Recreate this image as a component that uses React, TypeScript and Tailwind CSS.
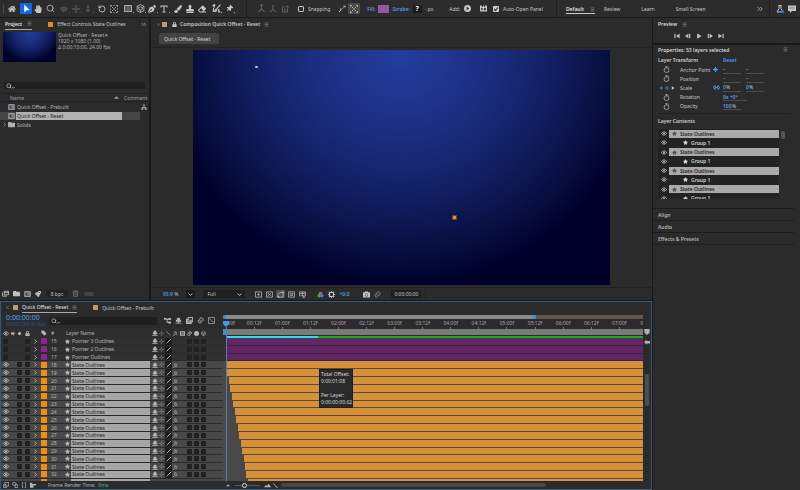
import type { ReactNode } from "react";
import { clsx } from "clsx";
import {
  FaCamera,
  FaEraser,
  FaFolder,
  FaHandPaper,
  FaHome,
  FaLock,
  FaPaintBrush,
  FaPenNib,
  FaRocket,
  FaStamp,
  FaStar,
  FaThumbtack,
} from "react-icons/fa";
import { RotateCcw, Search, Trash2 } from "lucide-react";

const ROW_COLS =
  "grid-cols-[9px_6px_7px_8px_9px_8px_15px_8px_79px_1px_7px_7px_7px_7px_7px_7px_7px_7px]";

/* ---------- icons ---------- */

interface GlyphProps {
  d: string;
  fill?: boolean;
  className?: string;
  box?: string;
  width?: number;
}

function Glyph({ d, fill, className, box = "0 0 16 16", width = 2 }: GlyphProps) {
  return (
    <svg
      className={clsx("shrink-0", className ?? "size-2")}
      viewBox={box}
      fill={fill ? "currentColor" : "none"}
      stroke={fill ? "none" : "currentColor"}
      strokeWidth={width}
      aria-hidden="true"
    >
      <path d={d} />
    </svg>
  );
}

function MenuIcon() {
  return <Glyph d="M2 3h12M2 8h12M2 13h12" className="size-[5px] text-[#8a8a8a]" />;
}

function EyeIcon() {
  return (
    <svg className="h-[5px] w-[6px]" viewBox="0 0 18 14" fill="none" aria-hidden="true">
      <path d="M1 7Q9-3 17 7Q9 17 1 7Z" stroke="#d0d0d0" strokeWidth="2.4" />
      <circle cx="9" cy="7" r="2.6" fill="#d0d0d0" />
    </svg>
  );
}

function ShyIcon({ className }: { className?: string }) {
  return (
    <Glyph
      fill
      className={clsx("text-[#b4b4b4]", className ?? "size-[6px]")}
      d="M4 7V5a4 4 0 018 0v2h2v4H9.500v2H15v2H1v-2h5.500v-2H2V7z"
    />
  );
}

function SunIcon() {
  return (
    <Glyph
      className="size-[5px] text-[#8c8c8c]"
      d="M8 5a3 3 0 100 6 3 3 0 000-6M8 0v3M8 13v3M0 8h3M13 8h3"
    />
  );
}

function StopwatchIcon() {
  return (
    <Glyph
      className="size-[7px] text-[#b4b4b4]"
      width={1.8}
      d="M8 4a5.300 5.300 0 100 11A5.300 5.300 0 008 4zM5.500 1h5M8 1v3M12.500 3l1.500 1.500"
    />
  );
}

function NetworkIcon({ className }: { className?: string }) {
  return <Glyph fill className={className} d="M6 1h4v4H9v3h5v3h1v4h-5v-4h2v-1H4v1h2v4H1v-4h1V8h5V5H6z" />;
}

function CompIcon({ className }: { className?: string }) {
  return (
    <svg className={clsx("shrink-0", className)} viewBox="0 0 21 18" aria-hidden="true">
      <rect x="1" y="1" width="19" height="16" fill="#cfcfcf" />
      <rect x="4" y="3" width="13" height="12" fill="#566b80" />
      <circle cx="12" cy="8" r="3.500" fill="#d97b4e" />
      <path d="M5 6h6v7H5z" fill="#2b4f8c" />
      <path d="M1 4h3M1 8h3M1 12h3M17 4h3M17 8h3M17 12h3" stroke="#444" strokeWidth="1.500" />
    </svg>
  );
}

/* ---------- toolbar ---------- */

function Tool({
  label,
  children,
  active,
  dim,
  corner,
}: {
  label: string;
  children: ReactNode;
  active?: boolean;
  dim?: boolean;
  corner?: boolean;
}) {
  return (
    <button
      type="button"
      aria-label={label}
      className={clsx(
        "relative flex h-[11px] w-3 shrink-0 items-center justify-center rounded-[1px]",
        active && "bg-[#1166e8] text-white",
        dim && "text-[#5c5c5c]"
      )}
    >
      {children}
      {corner && (
        <span className="absolute right-0 bottom-px size-px bg-current opacity-80" />
      )}
    </button>
  );
}

function Divider() {
  return <span className="h-[17px] w-px shrink-0 bg-[#1f1f1f]" />;
}

function Toolbar() {
  return (
    <header className="flex h-[17px] shrink-0 items-center overflow-hidden bg-[#2c2c2c] text-[#c6c6c6]">
      <span className="ml-[3px] mr-[2px] h-[10px] w-px bg-[#4a4a4a]" />
      <Tool label="Home">
        <FaHome className="size-2" />
      </Tool>
      <div className="ml-[2px] flex">
        <Tool label="Selection" active>
          <Glyph fill className="size-[9px]" d="M4 1l10 10H8.500L4 15z" />
        </Tool>
        <Tool label="Hand">
          <FaHandPaper className="size-2" />
        </Tool>
        <Tool label="Zoom">
          <Search className="size-[9px]" />
        </Tool>
      </div>
      <div className="ml-[2px] flex">
        <Tool label="Orbit" dim corner>
          <Glyph
            className="size-2"
            d="M4 8a4 3 0 018 0 4 3 0 01-8 0M3 4C-1 8 3 13 8 13M13 5c3 3 1 7-3 8M8 5v6"
          />
        </Tool>
        <Tool label="Pan" dim corner>
          <Glyph
            className="size-2"
            d="M8 1v14M1 8h14M6 3l2-2 2 2M6 13l2 2 2-2M3 6L1 8l2 2M13 6l2 2-2 2"
          />
        </Tool>
        <Tool label="Dolly" dim corner>
          <Glyph className="size-2" d="M8 1v12M4 9l4 5 4-5M6 3h4" />
        </Tool>
      </div>
      <div className="ml-[2px] flex">
        <Tool label="Rotate">
          <RotateCcw className="size-2" strokeWidth={2.6} />
        </Tool>
        <Tool label="Pan Behind">
          <Glyph
            className="size-2"
            width={1.6}
            d="M1 4V1h3M7 1h2M12 1h3v3M15 7v2M15 12v3h-3M9 15H7M4 15H1v-3M1 9V7M4 4l3 3M12 4L9 7M4 12l3-3M12 12L9 9"
          />
        </Tool>
      </div>
      <div className="ml-[2px] flex">
        <Tool label="Rectangle" corner>
          <span className="h-[7px] w-2 border border-[#a8a8a8] bg-[#5f5f5f]" />
        </Tool>
        <Tool label="Camera" corner>
          <Glyph
            className="size-[9px]"
            width={1.4}
            d="M8 1l6 3v8l-6 3-6-3V4zM8 5l3 1.500v3L8 11 5 9.500v-3zM2 4l3 2.500M14 4l-3 2.500M8 11v4"
          />
        </Tool>
        <Tool label="Pen" corner>
          <FaPenNib className="size-2" />
        </Tool>
        <Tool label="Type" corner>
          <Glyph fill className="size-2" d="M1 1h14v4h-2V3H9v10h2v2H5v-2h2V3H3v2H1z" />
        </Tool>
      </div>
      <div className="ml-[2px] flex">
        <Tool label="Brush">
          <FaPaintBrush className="size-2" />
        </Tool>
        <Tool label="Clone Stamp">
          <FaStamp className="size-2" />
        </Tool>
        <Tool label="Eraser">
          <FaEraser className="size-2" />
        </Tool>
      </div>
      <div className="ml-[2px] flex gap-px">
        <Tool label="Roto Brush" corner>
          <Glyph
            className="size-[9px]"
            d="M15 1L8 9M8 9c-2 0-2 3-4 4 3 1 5-1 5-3M4 1v5M1 4l3-3 2 2M3 7l-1 7M12 9v5h3"
          />
        </Tool>
        <Tool label="Puppet Pin" corner>
          <FaThumbtack className="size-[7px] rotate-45" />
        </Tool>
      </div>
      <span className="ml-[11px] flex">
        <Divider />
      </span>
      <div className="ml-2 flex text-[#666]">
        <Tool label="Local axis">
          <Glyph className="size-[9px]" d="M8 1v8M8 9l-6 5M8 9l6 5M6 3l2-2 2 2" />
        </Tool>
        <Tool label="World axis">
          <Glyph className="size-2" d="M8 1v8M8 9l-6 5M8 9l6 5M6 3l2-2 2 2" />
        </Tool>
        <Tool label="View axis">
          <Glyph className="size-2" d="M3 5v9h10V7M2 1l6 6M10 3h4v3M6 10h4" />
        </Tool>
      </div>
      <label className="ml-[7px] flex items-center gap-1">
        <input
          type="checkbox"
          className="size-[6px] appearance-none rounded-[1px] border border-[#c0c0c0]"
        />
        Snapping
      </label>
      <div className="ml-1.5 flex">
        <Tool label="Snap edges">
          <Glyph className="size-2" d="M2 14l5-5M9 7l2-2M11 2h3v3M4 8h3" />
        </Tool>
        <span className="flex h-[11px] rounded-[1px] bg-[#4a4a4a]">
          <Tool label="Snap features">
            <Glyph
              className="size-2"
              width={1.6}
              d="M1 4V1h3M12 1h3v3M15 12v3h-3M4 15H1v-3M4 4l3 3M12 4L9 7M4 12l3-3M12 12L9 9"
            />
          </Tool>
        </span>
      </div>
      <div className="ml-[7px] flex items-center">
        <button type="button" className="font-semibold text-[#4c9bee]">
          Fill:
        </button>
        <span className="ml-[2px] h-2 w-[11px] bg-[#91579f]" />
        <button type="button" className="ml-1 font-semibold text-[#4c9bee]">
          Stroke:
        </button>
        <span className="ml-[3px] flex h-2 w-[9px] items-center justify-center bg-[#1b1b1b] text-[7px] font-bold text-white">
          ?
        </span>
        <span className="ml-[3px]">
          <span className="text-[#4c9bee]">-</span> px
        </span>
      </div>
      <div className="ml-4 flex items-center">
        Add:
        <button type="button" aria-label="Add shape" className="ml-1">
          <Glyph fill className="size-[7px]" d="M8 0a8 8 0 100 16A8 8 0 008 0zM6 4l6 4-6 4z" />
        </button>
      </div>
      <Glyph
        fill
        className="ml-[9px] size-[7px]"
        d="M0 1h4v3h3V1h2v3h3V1h4v14H0zM3 7v5h3V7zM9 7v5h4V7z"
      />
      <label className="ml-1.5 flex items-center gap-1 whitespace-nowrap">
        <span className="relative flex">
          <input
            type="checkbox"
            defaultChecked
            className="size-[6px] appearance-none rounded-[1px] bg-[#cfcfcf]"
          />
          <Glyph
            className="pointer-events-none absolute inset-0 size-[6px] text-[#222]"
            width={3}
            d="M3 8l4 4 6-8"
          />
        </span>
        Auto-Open Panel
      </label>
      <nav className="ml-[13px] flex flex-1 items-center whitespace-nowrap">
        <Divider />
        <a
          href="#default"
          className="ml-[9px] flex items-center gap-1.5 border-b border-[#c8c8c8] pt-[3px] pb-px font-semibold text-[#e2e2e2]"
        >
          Default
          <MenuIcon />
        </a>
        <a href="#review" className="ml-[9px]">
          Review
        </a>
        <a href="#learn" className="ml-[21px]">
          Learn
        </a>
        <a href="#small" className="ml-[21px]">
          Small Screen
        </a>
      </nav>
      <Glyph className="mr-1.5 size-[6px]" d="M2 3l5 5-5 5M9 3l5 5-5 5" />
      <Divider />
      <span className="relative ml-1.5 flex">
        <Glyph className="size-2" d="M5 1h6M6 1v6l-4 7h12l-4-7V1" />
        <span className="absolute right-0 bottom-0 size-[3px] rounded-full bg-[#1b7bff]" />
      </span>
      <Glyph
        fill
        className="mx-1 size-2"
        d="M0 1h16v11H8l-4 4v-4H0zM3 5v2h2V5zM7 5v2h2V5zM11 5v2h2V5z"
      />
    </header>
  );
}

/* ---------- project panel ---------- */

function ProjectItem({ name, kind, selected }: { name: string; kind: "comp" | "folder"; selected?: boolean }) {
  return (
    <li className="flex h-[9px] items-center">
      <span
        className={clsx(
          "flex h-2 w-[140px] items-center",
          selected && "bg-[#454545] text-[#222]"
        )}
      >
        <span className="flex w-2 justify-center">
          {kind === "folder" && (
            <Glyph className="size-[5px] text-[#b0b0b0]" d="M5 2l6 6-6 6" />
          )}
        </span>
        {kind === "comp" ? (
          <CompIcon className="h-[6px] w-[7px]" />
        ) : (
          <FaFolder className="size-[7px] text-[#b0b0b0]" />
        )}
        <span className={clsx("ml-px flex h-2 w-[106px] items-center pl-px", selected && "bg-[#b1b1b1]")}>
          {name}
        </span>
      </span>
      {name === "Quick Offset - Prebuilt" && <NetworkIcon className="ml-px size-[6px]" />}
    </li>
  );
}

function SearchBox({ label, className }: { label: string; className: string }) {
  return (
    <div className={clsx("relative flex items-center rounded-[1px] bg-[#1e1e1e]", className)}>
      <input aria-label={label} className="h-full w-full bg-transparent pl-3 outline-none" />
      <span className="pointer-events-none absolute left-[2px] flex items-end">
        <Search className="size-[6px]" strokeWidth={3} />
        <Glyph className="size-[3px]" width={4} d="M1 5l7 7 7-7" />
      </span>
    </div>
  );
}

function ProjectPanel() {
  return (
    <section className="flex w-[149px] shrink-0 flex-col bg-[#2b2b2b]">
      <div className="flex h-3 items-center pl-[5px]">
        <h2 className="flex h-full items-center gap-[5px] border-b border-[#a8a8a8] font-semibold text-[#e0e0e0]">
          Project <MenuIcon />
        </h2>
        <span className="ml-4 size-[5px] bg-[#e38b12]" />
        <span className="ml-1 text-[#c6c6c6]">Effect Controls State Outlines</span>
        <Glyph className="mr-[3px] ml-auto size-[5px]" d="M2 3l5 5-5 5M9 3l5 5-5 5" />
      </div>
      <div className="mt-[2px] flex gap-[2px] pl-[3px]">
        <div className="h-[30px] w-[53px] bg-[radial-gradient(ellipse_58%_100%_at_50%_0%,#243d9e,#1b2f82_35%,#121f62_62%,#070e3f_86%,#00002a)]" />
        <div className="leading-[6px] text-[#b0b0b0]">
          <p>Quick Offset - Reset ▾</p>
          <p>1920 x 1080 (1.00)</p>
          <p>Δ 0:00:10:00, 24.00 fps</p>
        </div>
      </div>
      <SearchBox label="Search project" className="mt-5 mr-1 ml-1 h-[7px]" />
      <div className="mt-1 flex h-[9px] items-center border-y border-[#222] pl-[10px] text-[#a0a0a0]">
        Name
        <Glyph fill className="mr-[5px] ml-auto size-[5px]" d="M0 12l8-8 8 8z" />
        <span className="w-[25px]">Comment</span>
      </div>
      <ul className="flex-1 text-[#b4b4b4]">
        <ProjectItem name="Quick Offset - Prebuilt" kind="comp" />
        <ProjectItem name="Quick Offset - Reset" kind="comp" selected />
        <ProjectItem name="Solids" kind="folder" />
      </ul>
      <footer className="flex h-[13px] items-center gap-1 pl-[2px] text-[#c0c0c0]">
        <Glyph className="size-[7px]" d="M5 3h10v8H5zM1 6v8h10M5 6h10" />
        <FaFolder className="size-[7px]" />
        <CompIcon className="h-[6px] w-[7px]" />
        <FaRocket className="size-[6px]" />
        <button type="button" className="ml-px h-[7px] w-[22px] rounded-[1px] bg-[#232323]">
          8 bpc
        </button>
        <Trash2 className="size-[7px] text-[#8a8a8a]" />
        <span className="ml-px h-1 w-[10px] rounded-full bg-[#444]" />
      </footer>
    </section>
  );
}

/* ---------- composition viewer ---------- */

function ViewButton({ d, active, label }: { d: string; active?: boolean; label: string }) {
  return (
    <button
      type="button"
      aria-label={label}
      className={clsx("flex h-2 w-[9px] items-center justify-center rounded-[1px]", active && "bg-[#505050]")}
    >
      <Glyph className="size-[7px]" d={d} width={1.6} />
    </button>
  );
}

function CompositionPanel() {
  return (
    <section className="flex min-w-0 flex-1 flex-col bg-[#2b2b2b]">
      <div className="flex h-3 items-center pl-1.5 text-[#c6c6c6]">
        <Glyph className="size-[3px] text-[#8a8a8a]" width={3} d="M2 2l12 12M14 2L2 14" />
        <span className="ml-[2px] size-[5px] bg-[#b89a78]" />
        <FaLock className="ml-[5px] size-[5px]" />
        <h2 className="mr-1 ml-[3px] font-semibold">Composition Quick Offset - Reset</h2>
        <MenuIcon />
      </div>
      <div className="flex h-[18px] items-center border-b border-[#222] pl-2">
        <button type="button" className="h-[11px] w-[60px] rounded-[2px] bg-[#434343] pl-[5px] text-left text-[#d4d4d4]">
          Quick Offset - Reset
        </button>
      </div>
      <div className="flex min-h-0 flex-1 items-center justify-center py-[2px]">
        <div className="relative aspect-video h-full bg-[radial-gradient(ellipse_58%_100%_at_50%_0%,#243d9e,#1b2f82_35%,#121f62_62%,#070e3f_86%,#00002a)]">
          <span className="absolute top-[7%] left-[15%] h-[2px] w-[3px] rounded-full bg-[#d9b9dc]" />
          <span className="absolute top-[70%] left-[62%] size-[5px] border border-[#6b4620] bg-[#f28c14]" />
        </div>
      </div>
      <footer className="flex h-[13px] items-center border-t border-[#222] pl-3 text-[#c6c6c6]">
        <span className="font-semibold text-[#4c9bee]">93.9</span>&nbsp;%
        <button type="button" aria-label="Magnification" className="ml-2 flex h-2 w-[9px] items-center justify-center bg-[#1d1d1d]">
          <Glyph className="size-[5px]" width={3} d="M2 5l6 6 6-6" />
        </button>
        <span className="ml-2 h-[11px] w-px bg-[#222]" />
        <div className="relative flex items-center">
          <select aria-label="Resolution" className="h-2 w-[41px] appearance-none bg-[#1f1f1f] pl-[3px] outline-none">
            <option>Full</option>
            <option>Half</option>
          </select>
          <Glyph className="pointer-events-none absolute right-[3px] size-[5px]" width={3} d="M2 5l6 6 6-6" />
        </div>
        <div className="ml-[9px] flex gap-[2px]">
          <ViewButton label="Fast previews" d="M1 2h14v12H1zM9 4L6 8h4l-3 4" />
          <ViewButton label="Transparency grid" d="M1 2h14v12H1zM4 5l8 6M12 5l-8 6" />
          <ViewButton label="Mask visibility" active d="M2 14V8l5-5h7v11zM1 13h3v3M12 2h3v3" />
          <ViewButton label="Region of interest" d="M1 2h14v12H1zM5 6h6v4H5z" />
          <ViewButton label="Guides" d="M1 2h14v9H1zM8 2v9M1 6h14M11 12v4M8 14h6" />
        </div>
        <svg className="ml-[10px] size-[7px]" viewBox="0 0 16 16" aria-hidden="true">
          <circle cx="8" cy="5" r="4" fill="#e0483c" />
          <circle cx="5" cy="11" r="4" fill="#38b04a" />
          <circle cx="11" cy="11" r="4" fill="#3b7de0" />
        </svg>
        <Glyph
          className="ml-1 size-[7px]"
          width={2.4}
          d="M8 3a5 5 0 100 10A5 5 0 008 3M8 0v3M8 13v3M0 8h3M13 8h3M2 2l3 3M14 2l-3 3M2 14l3-3M14 14l-3-3"
        />
        <span className="ml-1 font-semibold text-[#4c9bee]">+0.0</span>
        <FaCamera className="ml-[14px] size-[7px]" />
        <Glyph className="ml-1 size-[7px] text-[#8a8a8a]" d="M10 2a4 4 0 100 8 4 4 0 000-8M6 6a4 4 0 103 7" />
        <span className="ml-[10px] rounded-[1px] bg-[#1f1f1f] px-[3px] py-px">0:00:00:00</span>
        <span className="ml-1 h-[11px] w-px bg-[#222]" />
      </footer>
    </section>
  );
}

/* ---------- right column ---------- */

function ValueField({ label, value, unit, wide }: { label: string; value: string; unit?: string; wide?: boolean }) {
  return (
    <span className={clsx("flex items-center border-b border-[#4d4d4d]", wide ? "w-6" : "w-[18px]")}>
      <input
        aria-label={label}
        defaultValue={value}
        size={1}
        className={clsx(
          "h-[7px] bg-transparent font-semibold text-[#4c9bee] outline-none",
          value.length > 4 ? "w-5" : value.length > 2 ? "w-[9px]" : "w-[3px]"
        )}
      />
      {unit}
    </span>
  );
}

const TRANSFORM = [
  { name: "Anchor Point", values: ["–", "–"] },
  { name: "Position", values: ["–", "–"] },
  { name: "Scale", values: ["0", "0"], unit: "%" },
  { name: "Rotation", values: ["0x +0°"] },
  { name: "Opacity", values: ["100"], unit: "%" },
];

function PropertiesPanel() {
  return (
    <section className="px-[5px] pt-px">
      <h2 className="flex h-[7px] items-center justify-between pr-[7px] font-semibold text-[#d8d8d8]">
        Properties: 53 layers selected <MenuIcon />
      </h2>
      <div className="mt-[3px] flex h-[7px] items-center text-[#d0d0d0]">
        <h3 className="w-[65px] font-semibold">Layer Transform</h3>
        <button type="button" className="font-semibold text-[#4c9bee]">
          Reset
        </button>
      </div>
      <div className="mt-[2px] grid h-[46px] grid-rows-5 text-[#c6c6c6]">
        {TRANSFORM.map((p) => (
          <div key={p.name} className="flex items-center">
            <span className="flex w-[22px] items-center justify-center gap-[2px] pr-[5px]">
              {p.name === "Scale" ? (
                <>
                  <Glyph fill className="size-[4px] text-[#777]" d="M13 1v14L2 8z" />
                  <Glyph className="size-[4px] text-[#4c9bee]" width={3} d="M8 2l6 6-6 6-6-6z" />
                  <Glyph fill className="size-[4px]" d="M3 1v14l11-7z" />
                </>
              ) : (
                <StopwatchIcon />
              )}
            </span>
            <span className="w-[33px] whitespace-nowrap">{p.name}</span>
            <span className="flex w-[10px] text-[#4c9bee]">
              {p.name === "Anchor Point" && <Glyph className="size-[5px]" width={3} d="M8 0v16M0 8h16M5 5h6v6H5z" />}
              {p.name === "Scale" && (
                <Glyph className="h-[5px] w-[7px]" box="0 0 21 15" width={3} d="M9 3H6a4 4 0 000 9h3M12 3h3a4 4 0 010 9h-3M6 7.500h9" />
              )}
            </span>
            <span className="flex gap-[5px]">
              {p.values.map((v, i) => (
                <ValueField key={i} label={`${p.name} ${i + 1}`} value={v} unit={p.unit} wide={v.length > 4} />
              ))}
            </span>
          </div>
        ))}
      </div>
      <h3 className="mt-[2px] mr-[5px] flex h-[15px] items-center border-t border-[#202020] font-semibold text-[#d0d0d0]">
        Layer Contents
      </h3>
      <div className="mt-px flex h-[70px] gap-[2px] overflow-hidden">
        <ul className="grid h-[74px] w-[121px] shrink-0 grid-rows-8 bg-[#232323]">
          {[0, 1, 2, 3, 4, 5, 6, 7].map((i) => (
            <li key={i} className="flex items-center pl-[3px]">
              <EyeIcon />
              {i % 2 === 0 ? (
                <span className="ml-[2px] flex h-2 flex-1 items-center gap-[3px] bg-[#a9a9a9] pl-[3px] font-semibold text-[#222]">
                  <FaStar className="size-[5px] text-[#555]" /> State Outlines
                </span>
              ) : (
                <span className="ml-4 flex items-center gap-[3px] font-semibold text-[#d4d4d4]">
                  <FaStar className="size-[5px]" /> Group 1
                </span>
              )}
            </li>
          ))}
        </ul>
        <span className="mt-[2px] h-2 w-[4px] rounded-full bg-[#565656]" />
      </div>
    </section>
  );
}

function RightColumn() {
  return (
    <aside className="flex w-[147px] shrink-0 flex-col">
      <section className="h-[25px] bg-[#2b2b2b]">
        <h2 className="flex h-3 items-center gap-[5px] pl-[5px] font-semibold text-[#d8d8d8]">
          Preview <MenuIcon />
        </h2>
        <div className="flex items-center gap-[5px] pt-[3px] pl-[21px] text-[#c4c4c4]">
          <Glyph fill className="size-[6px]" d="M1 2h3v12H1zM15 2v12L5 8z" />
          <Glyph fill className="size-[6px]" d="M9 2v12L0 8zM11 2h3v12h-3z" />
          <Glyph fill className="size-[6px]" d="M3 1v14l12-7z" />
          <Glyph fill className="size-[6px]" d="M2 2h3v12H2zM7 2v12l9-6z" />
          <Glyph fill className="size-[6px]" d="M12 2h3v12h-3zM1 2v12l10-6z" />
        </div>
      </section>
      <div className="mt-[2px] flex flex-1 flex-col bg-[#2b2b2b]">
        <div className="h-[163px] shrink-0">
          <PropertiesPanel />
        </div>
        {["Align", "Audio", "Effects & Presets"].map((name) => (
          <h2 key={name} className="mr-[6px] flex h-3 items-center border-t border-[#1d1d1d] pl-[5px] font-semibold text-[#b4b4b4]">
            {name}
          </h2>
        ))}
        <div className="mr-[6px] border-t border-[#1d1d1d]" />
      </div>
    </aside>
  );
}

/* ---------- timeline ---------- */

interface Layer {
  index: number;
  name: string;
  selected: boolean;
}

const LAYERS: Layer[] = Array.from({ length: 18 }, (_, i) => ({
  index: 15 + i,
  name: ["Pointer 3 Outlines", "Pointer 2 Outlines", "Pointer Outlines"][i] ?? "State Outlines",
  selected: i > 2,
}));

// half seconds that fit in the visible part of the ruler
const VISIBLE_STEPS = 14.84;
const OFFSET_PERCENT = 0.35;

const TICKS = Array.from({ length: 14 }, (_, i) => {
  const step = i + 1;
  const sec = String(Math.floor(step / 2)).padStart(2, "0");
  return `${sec}:${step % 2 ? "12" : "00"}f`;
});

function Cell({ children }: { children?: ReactNode }) {
  return <span className="flex items-center justify-center">{children}</span>;
}

function DarkBox() {
  return <span className="size-[5px] bg-[#212121]" />;
}

function LayerRow({ layer }: { layer: Layer }) {
  const { selected } = layer;
  return (
    <li
      className={clsx(
        "grid min-h-0 flex-1 border-b border-[#2a2a2a] text-[#b4b4b4]",
        ROW_COLS,
        selected ? "bg-[#484848]" : "bg-[#303030]"
      )}
    >
      <Cell>{selected ? <EyeIcon /> : <DarkBox />}</Cell>
      <Cell />
      <Cell>{selected && <DarkBox />}</Cell>
      <Cell>
        <DarkBox />
      </Cell>
      <Cell>
        <Glyph className="size-[5px]" width={3} d="M5 2l6 6-6 6" />
      </Cell>
      <Cell>
        <span className={clsx("size-[6px]", selected ? "bg-[#ee8d10]" : "bg-[#8e2396]")} />
      </Cell>
      <span className="flex items-center pl-[3px]">{layer.index}</span>
      <Cell>
        <FaStar className="size-[5px]" />
      </Cell>
      <span
        className={clsx("flex items-center pl-px whitespace-nowrap", selected && "bg-[#a6a6a6] text-[#222]")}
      >
        {layer.name}
      </span>
      <Cell />
      <Cell>
        <ShyIcon />
      </Cell>
      <Cell>
        <SunIcon />
      </Cell>
      <span className="flex items-center justify-center bg-[#1c1c1c]">
        <Glyph className="size-[6px] text-[#d8d8d8]" d="M14 2L2 14" />
      </span>
      <Cell>{selected && <i className="font-serif">fx</i>}</Cell>
      <Cell />
      <Cell>
        <DarkBox />
      </Cell>
      <Cell>
        <DarkBox />
      </Cell>
      <Cell>
        <DarkBox />
      </Cell>
    </li>
  );
}

function LayerHeader() {
  return (
    <div className={clsx("grid h-[10px] bg-[#2e2e2e] text-[#b4b4b4]", ROW_COLS)}>
      <Cell>
        <EyeIcon />
      </Cell>
      <Cell>
        <Glyph fill className="size-[5px]" d="M0 5h4l5-4v14l-5-4H0zM11 3q5 5 0 10z" />
      </Cell>
      <Cell>
        <span className="size-[3px] rounded-full bg-[#c4c4c4]" />
      </Cell>
      <Cell>
        <FaLock className="size-[5px]" />
      </Cell>
      <Cell />
      <Cell>
        <Glyph fill className="size-[6px]" d="M1 1h6l8 8-6 6-8-8z" />
      </Cell>
      <span className="flex items-center pl-[3px]">#</span>
      <span className="col-span-2 flex items-center pl-[3px]">Layer Name</span>
      <Cell />
      <Cell>
        <ShyIcon />
      </Cell>
      <Cell>
        <SunIcon />
      </Cell>
      <Cell>
        <Glyph className="size-[5px]" d="M2 2l12 12" />
      </Cell>
      <Cell>
        <i className="font-serif">fx</i>
      </Cell>
      <Cell>
        <Glyph fill className="size-[5px]" d="M0 1h16v14H0zM3 5v2h10V5zM3 9v2h10V9z" />
      </Cell>
      <Cell>
        <Glyph className="size-[5px]" width={3} d="M10 2a4 4 0 100 8 4 4 0 000-8M5 7a4 4 0 104 6" />
      </Cell>
      <Cell>
        <Glyph fill className="size-[5px]" d="M8 0a8 8 0 100 16A8 8 0 008 0zM8 3v10a5 5 0 000-10z" />
      </Cell>
      <Cell>
        <Glyph className="size-[5px]" d="M8 1l6 4v6l-6 4-6-4V5zM2 5l6 4 6-4M8 9v6" />
      </Cell>
    </div>
  );
}

function TrackArea() {
  return (
    <div className="relative flex min-w-0 flex-1 flex-col overflow-hidden">
      <div className="mt-[2px] flex h-1 bg-[#61574f]">
        <span className="w-[3px] rounded-l-full bg-[#2f93ec]" />
        <span className="w-[73%] bg-[#8b8b8b]" />
        <span className="w-[3px] bg-[#2f93ec]" />
      </div>
      <div className="ml-[3px] flex h-[10px] justify-between pt-px text-[#a8a8a8]">
        <span className="shrink-0" style={{ width: `${50 / VISIBLE_STEPS}%` }}>
          :00f
        </span>
        {TICKS.map((t) => (
          <span
            key={t}
            className="flex shrink-0 flex-col items-center justify-between"
            style={{ width: `${100 / VISIBLE_STEPS}%` }}
          >
            <span>{t}</span>
            <span className="h-[2px] w-px bg-[#777]" />
          </span>
        ))}
        <span className="flex-1 text-right">0</span>
      </div>
      <div className="flex h-[6px] bg-[#7b7b7b]">
        <span className="w-[3px] rounded-l-full bg-[#2f93ec]" />
        <span className="w-3/5 bg-[linear-gradient(4deg,#7b7b7b_45%,#857286_60%,#7b7b7b_75%)]" />
      </div>
      <div className="mt-px ml-[3px] flex h-[2px]">
        <span className="w-[22%] bg-[#22e3e6]" />
        <span className="flex-1 bg-[#12ae18]" />
      </div>
      <div className="flex min-h-0 flex-1 flex-col bg-[#484848]">
        {LAYERS.map((l, i) => (
          <div
            key={l.index}
            className={clsx(
              "flex min-h-0 flex-1 pl-[3px]",
              !l.selected && "bg-[#303030]"
            )}
          >
            <span
              className={clsx(
                "flex-1 border-b",
                l.selected ? "border-[#5e4a30] bg-[#d5913a]" : "border-[#3d2142] bg-[#622566]"
              )}
              style={{ marginLeft: `${Math.max(0, i - 3) * OFFSET_PERCENT}%` }}
            />
          </div>
        ))}
        <div className="flex h-[2px] shrink-0 justify-end">
          <span className="w-[94%] bg-[#d5913a]" />
        </div>
      </div>
      {/* playhead */}
      <div className="absolute top-2 bottom-0 left-0 flex w-[6px] flex-col items-center">
        <Glyph fill className="size-[6px] text-[#3d9cf5]" d="M0 0h16v8l-8 8-8-8z" />
        <span className="w-px flex-1 bg-[#4a7fb8]" />
      </div>
      {/* drag readout */}
      <div className="absolute top-[56px] left-24 border border-[#1d1d1d] bg-[#2a2a2a] pt-px pb-px pl-px leading-[7px] whitespace-nowrap text-[#d6d6d6]">
        <p>Total Offset:</p>
        <p>0:00:01:08</p>
        <p>&nbsp;</p>
        <p>Per Layer:</p>
        <p>0:00:00:00.62</p>
      </div>
    </div>
  );
}

function TimelinePanel() {
  return (
    <section className="mt-px flex h-[189px] shrink-0 flex-col border border-[#34597f] bg-[#2b2b2b]">
      <div className="flex h-[11px] items-center pl-[5px] text-[#c6c6c6]">
        <Glyph className="size-[3px] text-[#8a8a8a]" width={3} d="M2 2l12 12M14 2L2 14" />
        <span className="ml-1 size-[5px] bg-[#b89a78]" />
        <h2 className="ml-1 flex h-full items-center gap-1 border-b border-[#a8a8a8] text-[#e0e0e0]">
          Quick Offset - Reset <MenuIcon />
        </h2>
        <span className="ml-4 size-[5px] bg-[#b89a78]" />
        <span className="ml-1">Quick Offset - Prebuilt</span>
      </div>
      <div className="flex min-h-0 flex-1">
        <div className="flex w-[222px] shrink-0 flex-col">
          <div className="flex h-[15px] items-center pl-[5px]">
            <div className="w-[43px]">
              <p className="text-[7px] leading-[8px] text-[#4ba3f7]">0:00:00:00</p>
              <p className="leading-[5px] text-[#285a8c]">00000 (24.00 fps)</p>
            </div>
            <SearchBox label="Search layers" className="h-2 w-[108px] text-[#b4b4b4]" />
            <div className="ml-[7px] flex gap-1 text-[#b4b4b4]">
              <Glyph fill className="size-[7px]" d="M0 2h6v2h4V2h6v5h-6V6H8v5h2v-1h6v5h-6v-2H6V6H0z" />
              <ShyIcon className="size-[7px]" />
              <Glyph fill className="size-[7px]" d="M4 0h12v12h-3v4H0V4h4zM6 5v1h7v4h1V2H6zM3 8v1h7V8zM3 11v1h7v-1z" />
              <Glyph className="size-[7px]" d="M10 2a4 4 0 100 8 4 4 0 000-8M5 6a4 4 0 105 6" />
              <Glyph className="size-[7px]" width={1.6} d="M1 1h14v14H1zM3 4c4 0 5 8 10 8" />
            </div>
          </div>
          <LayerHeader />
          <ul className="flex min-h-0 flex-1 flex-col">
            {LAYERS.map((l) => (
              <LayerRow key={l.index} layer={l} />
            ))}
            <li className={clsx("grid h-[2px] shrink-0 bg-[#484848]", ROW_COLS)}>
              <span className="col-start-6 mx-px bg-[#ee8d10]" />
              <span className="col-start-9 bg-[#a6a6a6]" />
            </li>
          </ul>
        </div>
        <TrackArea />
        <div className="flex w-2 shrink-0 flex-col items-center text-[#b0b0b0]">
          <Glyph fill className="mt-4 size-[6px]" d="M1 0h14v10l-7 6-7-6z" />
          <Glyph fill className="mt-1 size-[6px]" d="M0 8l7-6v3h9v7H7v3z" />
          <span className="mt-[29px] h-8 w-[4px] rounded-full bg-[#505050]" />
        </div>
      </div>
      <footer className="flex h-2 shrink-0 items-center bg-[#2b2b2b] pl-[2px] text-[#b4b4b4]">
        <div className="flex gap-[3px]">
          <Glyph className="size-[6px]" d="M5 1h10v10H5zM1 5v10h10M5 5l6 6" />
          <Glyph className="size-[6px]" d="M6 1a5 4 0 100 8 5 4 0 000-8M8 7h7v8H8z" />
          <Glyph className="size-[6px]" d="M6 1H4v5L2 8l2 2v5h2M10 1h2v5l2 2-2 2v5h-2" />
          <Glyph fill className="size-[6px]" d="M0 2h6v3h10v4H9v6H0z" />
        </div>
        <span className="ml-3">Frame Render Time:</span>
        <span className="ml-[3px] text-[#36c2a6]">0ms</span>
        <div className="mr-1.5 ml-auto flex items-center">
          <div className="flex w-[53px] items-center">
            <Glyph fill className="size-[4px]" d="M0 13l8-8 8 8z" />
            <input
              type="range"
              aria-label="Timeline zoom"
              defaultValue={36}
              className="mx-1 h-[5px] w-[26px] appearance-none bg-[linear-gradient(#555,#555)] bg-[length:100%_1px] bg-center bg-no-repeat [&::-webkit-slider-thumb]:size-[5px] [&::-webkit-slider-thumb]:appearance-none [&::-webkit-slider-thumb]:rounded-full [&::-webkit-slider-thumb]:border [&::-webkit-slider-thumb]:border-[#ddd] [&::-webkit-slider-thumb]:bg-[#2b2b2b]"
            />
            <Glyph fill className="h-[5px] w-[7px]" box="0 0 21 15" d="M0 13l6-7 3 3 5-7 7 11z" />
            <Glyph className="ml-[2px] size-[5px]" width={3} d="M1 2c6 0 5 12 14 12" />
          </div>
          <span className="ml-[2px] h-[4px] w-[265px] rounded-full bg-[#474747]" />
          <span className="w-[99px]" />
        </div>
      </footer>
    </section>
  );
}

export default function App() {
  return (
    <div className="flex h-screen flex-col overflow-hidden bg-[#191919] font-['Noto_Sans',sans-serif] text-[5px] leading-[6px] text-[#c6c6c6]">
      <Toolbar />
      <main className="mt-px flex min-h-0 flex-1 gap-px">
        <div className="flex min-w-0 flex-1 flex-col">
          <div className="flex min-h-0 flex-1 gap-[2px]">
            <ProjectPanel />
            <CompositionPanel />
          </div>
          <TimelinePanel />
        </div>
        <RightColumn />
      </main>
    </div>
  );
}
